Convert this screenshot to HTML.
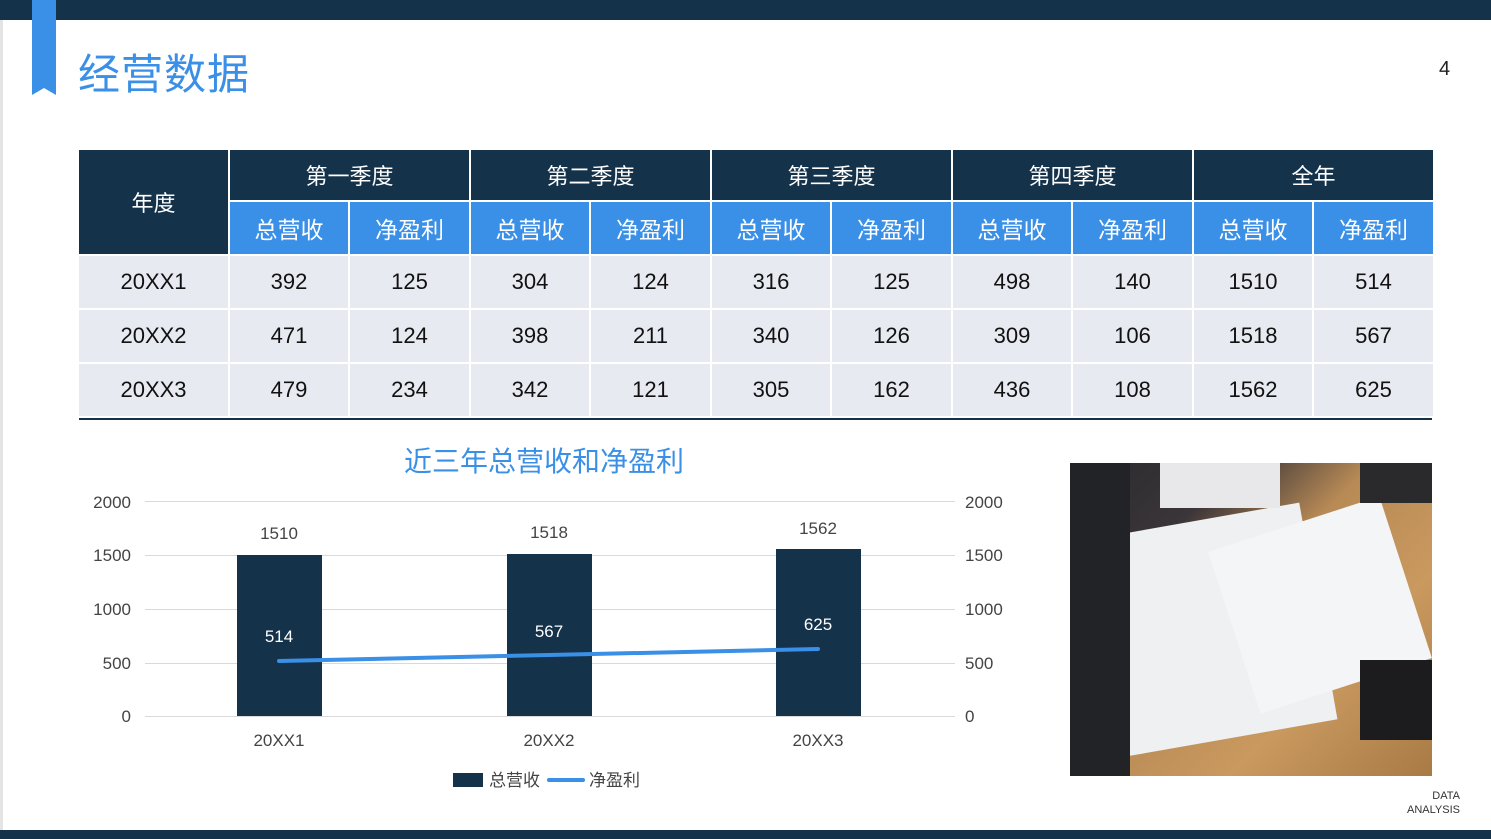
<!DOCTYPE html>
<html><head><meta charset="utf-8"><style>
body{margin:0;width:1491px;height:839px;position:relative;background:#fff;font-family:"Liberation Sans","Noto Sans CJK SC",sans-serif;overflow:hidden}
.abs{position:absolute}
table{position:absolute;left:77px;top:148px;border-collapse:collapse;table-layout:fixed}
td{text-align:center;padding:0;font-size:22px;color:#111;border:2px solid #fff}
.h1 td{background:#14324a;color:#fff;height:50px;font-size:22px}
.h2 td{background:#3a8fe6;color:#fff;height:52px;font-size:23px}
.d td{background:#e8eaf1;height:52px}
</style></head><body>
<div class="abs" style="left:0;top:0;width:1491px;height:20px;background:#14324a"></div>
<div class="abs" style="left:0;top:20px;width:3px;height:810px;background:#e4e4e4"></div>
<svg class="abs" style="left:32px;top:0" width="25" height="96"><polygon points="0,0 24,0 24,95 12,88 0,95" fill="#3a8fe6"/></svg>
<div class="abs" style="left:78px;top:41px;font-size:42px;color:#3a8fe6;letter-spacing:1px">经营数据</div>
<div class="abs" style="left:1439px;top:58px;font-size:20px;color:#222">4</div>
<table>
<colgroup><col style="width:151px"><col style="width:120px"><col style="width:121px"><col style="width:120px"><col style="width:121px"><col style="width:120px"><col style="width:121px"><col style="width:120px"><col style="width:121px"><col style="width:120px"><col style="width:121px"></colgroup>
<tr class="h1"><td rowspan="2" style="background:#14324a;color:#fff">年度</td><td colspan="2">第一季度</td><td colspan="2">第二季度</td><td colspan="2">第三季度</td><td colspan="2">第四季度</td><td colspan="2">全年</td></tr>
<tr class="h2"><td>总营收</td><td>净盈利</td><td>总营收</td><td>净盈利</td><td>总营收</td><td>净盈利</td><td>总营收</td><td>净盈利</td><td>总营收</td><td>净盈利</td></tr>
<tr class="d"><td>20XX1</td><td>392</td><td>125</td><td>304</td><td>124</td><td>316</td><td>125</td><td>498</td><td>140</td><td>1510</td><td>514</td></tr>
<tr class="d"><td>20XX2</td><td>471</td><td>124</td><td>398</td><td>211</td><td>340</td><td>126</td><td>309</td><td>106</td><td>1518</td><td>567</td></tr>
<tr class="d"><td>20XX3</td><td>479</td><td>234</td><td>342</td><td>121</td><td>305</td><td>162</td><td>436</td><td>108</td><td>1562</td><td>625</td></tr>
</table>
<div class="abs" style="left:79px;top:418px;width:1353px;height:2px;background:#14324a"></div>
<div class="abs" style="left:404px;top:440px;font-size:28px;color:#3a8fe6">近三年总营收和净盈利</div>
<svg class="abs" style="left:0;top:480px" width="1060" height="330" font-family="Liberation Sans, Noto Sans CJK SC, sans-serif" font-size="17" fill="#444">
<g stroke="#d9d9d9" stroke-width="1">
<line x1="145" y1="21.5" x2="955" y2="21.5"/><line x1="145" y1="75.5" x2="955" y2="75.5"/><line x1="145" y1="129.5" x2="955" y2="129.5"/><line x1="145" y1="183.5" x2="955" y2="183.5"/><line x1="145" y1="236.5" x2="955" y2="236.5"/></g>
<g text-anchor="end"><text x="131" y="28">2000</text><text x="131" y="81">1500</text><text x="131" y="135">1000</text><text x="131" y="189">500</text><text x="131" y="242">0</text></g>
<g><text x="965" y="28">2000</text><text x="965" y="81">1500</text><text x="965" y="135">1000</text><text x="965" y="189">500</text><text x="965" y="242">0</text></g>
<rect x="237" y="75" width="85" height="161" fill="#14324a"/>
<rect x="507" y="74" width="85" height="162" fill="#14324a"/>
<rect x="776" y="69" width="85" height="167" fill="#14324a"/>
<g text-anchor="middle"><text x="279" y="59">1510</text><text x="549" y="58">1518</text><text x="818" y="54">1562</text>
<text x="279" y="266">20XX1</text><text x="549" y="266">20XX2</text><text x="818" y="266">20XX3</text>
<g fill="#fff"><text x="279" y="162">514</text><text x="549" y="157">567</text><text x="818" y="150">625</text></g></g>
<polyline points="279,181 549,175 818,169" fill="none" stroke="#3a8fe6" stroke-width="4" stroke-linecap="round"/>
<rect x="453" y="293" width="30" height="14" fill="#14324a"/><text x="489" y="306">总营收</text>
<line x1="549" y1="300" x2="583" y2="300" stroke="#3a8fe6" stroke-width="4" stroke-linecap="round"/><text x="589" y="306">净盈利</text>
</svg>
<div class="abs" style="left:1070px;top:463px;width:362px;height:313px;background:linear-gradient(135deg,#2a2a2e 0%,#3a3538 25%,#b88a55 45%,#c9995f 70%,#a87a45 100%)"></div>
<div class="abs" style="left:1100px;top:520px;width:220px;height:220px;background:#eef0f2;transform:rotate(-10deg)"></div>
<div class="abs" style="left:1230px;top:520px;width:180px;height:170px;background:#f4f5f6;transform:rotate(-18deg)"></div>
<div class="abs" style="left:1160px;top:463px;width:120px;height:45px;background:#e8e8ea"></div>
<div class="abs" style="left:1070px;top:463px;width:60px;height:313px;background:#222326"></div>
<div class="abs" style="left:1360px;top:660px;width:72px;height:80px;background:#1c1c1e"></div>
<div class="abs" style="left:1360px;top:463px;width:72px;height:40px;background:#2a2a2c"></div>
<div class="abs" style="left:1395px;top:789px;font-size:11px;color:#333;text-align:right;line-height:14px;width:65px">DATA<br>ANALYSIS</div>
<div class="abs" style="left:0;top:830px;width:1491px;height:9px;background:#14324a"></div>
</body></html>
